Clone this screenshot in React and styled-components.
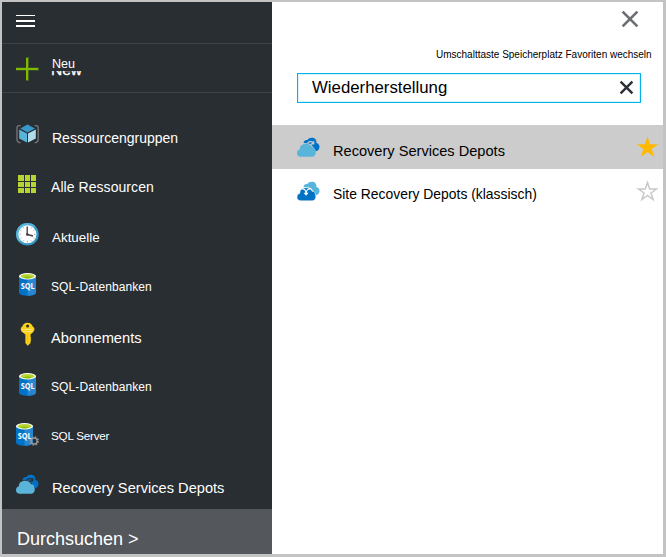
import React from "react";
import styled, { createGlobalStyle } from "styled-components";

const Global = createGlobalStyle`
  * { box-sizing: border-box; }
  body { margin: 0; background: #c3c3c3; font-family: "Liberation Sans", Arial, sans-serif; }
  svg { display: block; flex: none; }
`;

const Frame = styled.div`
  display: flex;
  width: 666px;
  height: 557px;
  padding: 2px 3px 3px 2px;
  background: #c3c3c3;
`;

const Sidebar = styled.nav`
  display: flex;
  flex-direction: column;
  width: 270px;
  background: #292e32;
  color: #fff;
`;

const MenuBar = styled.div`
  height: 42px;
  padding: 13px 14px 0;
  border-bottom: 1px solid #3e4347;
`;

const NewRow = styled.div`
  display: flex;
  height: 49px;
  padding: 13px 14px 0;
  border-bottom: 1px solid #3e4347;
`;

const NewText = styled.div`
  position: relative;
  margin-left: 12px;
`;

const HiddenCaption = styled.span`
  position: absolute;
  left: 0;
  top: 3px;
  font-size: 15.5px;
  line-height: 20px;
  -webkit-text-stroke: 0.3px #fff;
  clip-path: inset(11px 0 0 0);
`;

const Items = styled.div`
  display: flex;
  flex-direction: column;
  padding-top: 16px;
`;

const Item = styled.div`
  display: flex;
  height: 50px;
  padding: 13px 14px 0;
`;

const Label = styled.span`
  display: block;
  white-space: nowrap;
  line-height: 20px;
  height: 20px;
  font-size: ${(p) => p.$size}px;
  letter-spacing: ${(p) => p.$spacing || 0}px;
  margin-top: ${(p) => p.$top || 0}px;
  margin-left: ${(p) => p.$left || 0}px;
`;

const Browse = styled.div`
  flex: 1;
  padding: 10px 15px 0;
  background: #54575c;
`;

const Panel = styled.main`
  display: flex;
  flex-direction: column;
  flex: 1;
  background: #fff;
  color: #000;
`;

const PanelTop = styled.div`
  display: flex;
  justify-content: flex-end;
  height: 43px;
  padding: 7px 23px 0 0;
`;

const Hint = styled.div`
  height: 28px;
  padding-left: 164px;
`;

const SearchBox = styled.div`
  display: flex;
  justify-content: space-between;
  width: 344px;
  height: 30px;
  margin-left: 25px;
  padding: 4px 5px 0 14px;
  border: 1px solid #00b4ea;
  box-shadow: inset 0 0 0 1px #d8f3fb;
`;

const Results = styled.div`
  margin-top: 22px;
`;

const Result = styled.div`
  display: flex;
  height: 44px;
  padding: 10px 4px 0 25px;
  background: ${(p) => (p.$active ? "#cccccc" : "#ffffff")};
`;

const StarSlot = styled.span`
  margin-left: auto;
`;

const Cross = ({ size, width, color, top = 0 }) => (
  <svg width={size + 4} height={size + 4 + top} viewBox={`0 ${-top} ${size + 4} ${size + 4 + top}`}>
    <path
      d={`M2.600 2.600L${size + 1.4} ${size + 1.4}M${size + 1.4} 2.600L2.600 ${size + 1.4}`}
      stroke={color}
      strokeWidth={width}
    />
  </svg>
);

const MenuIcon = () => (
  <svg width="19" height="12" viewBox="0 0 19 12" fill="#fff">
    <rect width="19" height="1" />
    <rect y="5" width="19" height="2" />
    <rect y="10" width="19" height="2" />
  </svg>
);

const PlusIcon = () => (
  <svg width="23" height="24" viewBox="0 0 23 24">
    <path d="M10 0h3v24h-3zM0 10.500h23v3H0z" fill="#46641d" />
    <path d="M10 1h2v22h-2zM0 11h22v2H0z" fill="#80b900" />
  </svg>
);

const GroupIcon = () => (
  <svg width="24" height="24" viewBox="0 0 24 24">
    <path d="M4.600 3.600H3.200Q1 3.600 1 6v11.600Q1 20 3.200 20.500L4.600 21M18.600 3.600H20Q22.200 3.600 22.200 6v11.600Q22.200 20 20 20.500L18.600 21" fill="none" stroke="#75797c" strokeWidth="1.300" />
    <path d="M11.500 2.500L19 6.400 11.500 10.400 4.200 6.400z" fill="#3999c6" />
    <path d="M3.200 7.500L11 11.500V20.500L3.200 16.600z" fill="#59b4d9" />
    <path d="M19.800 7.500L12 11.500V20.500L19.800 16.600z" fill="#b0dcee" />
  </svg>
);

const GridIcon = () => (
  <svg width="24" height="24" viewBox="0 0 24 24" fill="#b8d432">
    {[3, 10, 16].map((y, r) =>
      [2, 9, 15].map((x, c) => (
        <rect key={`${x}-${y}`} x={x} y={y} width={c === 0 ? 6 : 5} height={r === 0 ? 6 : 5} />
      ))
    )}
  </svg>
);

const ClockIcon = () => (
  <svg width="24" height="24" viewBox="0 0 24 24">
    <circle cx="11.400" cy="12.300" r="11.300" fill="#3999c6" />
    <path d="M3.400 20.300A11.300 11.300 0 0 1 19.400 4.300z" fill="#59b4d9" />
    <circle cx="11.400" cy="12.300" r="9" fill="#fff" />
    <path d="M11.400 4.300v1.400M11.400 18.900v1.400M3.400 12.300h1.400M18 12.300h1.400M7.400 5.400l.5.900M15.400 5.400l-.5.900M4.500 8.300l.9.500M18.300 8.300l-.9.500M4.500 16.300l.9-.5M18.300 16.300l-.9-.5M7.400 19.200l.5-.9M15.400 19.200l-.5-.9" stroke="#888" strokeWidth=".8" />
    <path d="M11.200 4.800V12.500L17 14" fill="none" stroke="#3b3b3b" strokeWidth="1.300" />
    <circle cx="11.300" cy="12.500" r="1.300" fill="#3b3b3b" />
  </svg>
);

const Cylinder = () => (
  <>
    <path d="M0 3.200V19.500C0 21.500 4 22.800 8.500 22.800S17 21.500 17 19.500V3.200z" fill="#0072c6" />
    <path d="M8.500 3.200H17V19.500C17 21.500 13 22.800 8.500 22.800z" fill="#2686cf" />
    <ellipse cx="8.500" cy="3.300" rx="8.500" ry="3.200" fill="#fff" />
    <ellipse cx="8.500" cy="3.200" rx="6.800" ry="2.300" fill="#b8d432" />
    <path d="M3.600 4.600Q8.500 2.600 13.400 4.600Q8.500 6.400 3.600 4.600z" fill="#8cc010" />
    <text x="1.700" y="16" fill="#fff" fontFamily="Open Sans, sans-serif" fontWeight="700" fontSize="8" textLength="14" lengthAdjust="spacingAndGlyphs">SQL</text>
  </>
);

const DatabaseIcon = () => (
  <svg width="24" height="24" viewBox="0 0 24 24">
    <g transform="translate(3 1)"><Cylinder /></g>
  </svg>
);

const ServerIcon = () => (
  <svg width="24" height="24" viewBox="0 0 24 24">
    <g transform="translate(0 1)"><Cylinder /></g>
    <circle cx="18.200" cy="19" r="3" fill="none" stroke="#92969a" strokeWidth="1.500" />
    <circle cx="18.200" cy="19" r="4" fill="none" stroke="#92969a" strokeWidth="1.500" strokeDasharray="1.570 1.570" />
  </svg>
);

const KeyIcon = () => (
  <svg width="24" height="24" viewBox="0 0 24 24">
    <path fillRule="evenodd" d="M11.500 .800C14.500 .800 16.300 2.600 16.900 4.700C18.900 5.400 19 8.300 17.200 10L14.500 12.500V15L15.200 16 14.500 17 15.200 18 14.500 19.200V21L11.700 23.800 9.400 21V12.500L6.200 10C4.300 8.400 4.300 5.400 6.200 4.700C6.800 2.600 8.500 .800 11.500 .800zM11.600 2.600A1.500 1.500 0 1 0 11.600 5.600A1.500 1.500 0 1 0 11.600 2.600z" fill="#fcd116" />
    <path d="M6.500 7.500H16.700M6.500 9.500H16.700" stroke="#fff" strokeOpacity=".55" strokeWidth=".8" />
    <path d="M11.600 12.500V21.500" stroke="#f4b512" strokeWidth=".9" />
  </svg>
);

const BACK_CLOUD = "M6.500 7.800C6.700 5.800 8.500 4.600 10.400 5C11.500 3 14.500 2.200 16.700 3.100C18.900 3.900 19.700 5.900 19.400 7.900C21.700 8.300 22.900 10.500 22.500 12.600C22.100 14.500 21 16 19 16.200L14 9z";
const FRONT_CLOUD = "M4 21.800C1.400 21.800 0 20.300 0 18.200C0 16.200 1.200 14.700 2.900 14.300C2.600 10.900 5.200 8.700 8.800 8.700C12.200 8.700 14.400 10.100 15 12.300C17.300 12.100 18.500 13.500 18.200 15.300C19.700 17.500 18.500 21.800 15.200 21.800z";

const VaultIcon = ({ ground = "#292e32" }) => (
  <svg width="24" height="24" viewBox="0 0 24 24">
    <path d={BACK_CLOUD} fill="#0072c6" />
    <path d="M10.500 8.600C11.700 6.600 14 6 15.800 7.200" fill="none" stroke={ground} strokeWidth="1.300" />
    <path d="M17.300 5.500V9.600H13.200z" fill={ground} />
    <path d={FRONT_CLOUD} fill="#59b4d9" />
  </svg>
);

const ActiveVaultIcon = () => <VaultIcon ground="#cccccc" />;

const SiteRecoveryIcon = () => (
  <svg width="24" height="24" viewBox="0 0 24 24">
    <path d={BACK_CLOUD} fill="#59b4d9" />
    <path d={FRONT_CLOUD} fill="#0072c6" stroke="#fff" strokeWidth=".5" />
    <path d="M4.700 9.900Q9 9.300 9.100 15M13.800 9.900Q9.300 9.300 9.100 15" fill="none" stroke="#fff" strokeWidth="1.100" />
    <path d="M6.600 13.700H11.600L9.100 16.800z" fill="#fff" />
  </svg>
);

const StarIcon = ({ filled }) => (
  <svg width="23" height="24" viewBox="0 0 23 24">
    <path
      d={filled
        ? "M11.500 1.500L14.100 9.200H22.300L15.700 14L18.200 22L11.500 17.100L4.800 22L7.300 14L0.700 9.200H8.900z"
        : "M11.500 3.500L13.700 10.100H20.500L15 14L17.100 20.500L11.500 16.500L5.900 20.500L8 14L2.500 10.100H9.300z"}
      fill={filled ? "#ffb900" : "none"}
      stroke={filled ? "none" : "#c7c8ca"}
      strokeWidth="1.500"
    />
  </svg>
);

const items = [
  { text: "Ressourcengruppen", Icon: GroupIcon, size: 14, top: 6, left: 12 },
  { text: "Alle Ressourcen", Icon: GridIcon, size: 14, spacing: 0.06, top: 5, left: 11 },
  { text: "Aktuelle", Icon: ClockIcon, size: 13.4, top: 6, left: 12 },
  { text: "SQL-Datenbanken", Icon: DatabaseIcon, size: 12, spacing: 0.1, top: 5, left: 11 },
  { text: "Abonnements", Icon: KeyIcon, size: 14.7, top: 6, left: 11 },
  { text: "SQL-Datenbanken", Icon: DatabaseIcon, size: 12, spacing: 0.1, top: 5, left: 11 },
  { text: "SQL Server", Icon: ServerIcon, size: 11.7, spacing: -0.25, top: 4, left: 11 },
  { text: "Recovery Services Depots", Icon: VaultIcon, size: 14.6, spacing: 0.02, top: 6, left: 12 },
];

const results = [
  { text: "Recovery Services Depots", Icon: ActiveVaultIcon, size: 14.6, top: 6, active: true },
  { text: "Site Recovery Depots (klassisch)", Icon: SiteRecoveryIcon, size: 13.9, top: 5, active: false },
];

export default function App() {
  return (
    <>
      <Global />
      <Frame>
        <Sidebar>
          <MenuBar><MenuIcon /></MenuBar>
          <NewRow>
            <PlusIcon />
            <NewText>
              <HiddenCaption>New</HiddenCaption>
              <Label $size={12.6} $top={-3} $left={1}>Neu</Label>
            </NewText>
          </NewRow>
          <Items>
            {items.map(({ text, Icon, size, spacing, top, left }, i) => (
              <Item key={i}>
                <Icon />
                <Label $size={size} $spacing={spacing} $top={top} $left={left}>{text}</Label>
              </Item>
            ))}
          </Items>
          <Browse><Label $size={18} $top={10}>Durchsuchen &gt;</Label></Browse>
        </Sidebar>
        <Panel>
          <PanelTop><Cross size={16} width={2.700} color="#6b6e73" /></PanelTop>
          <Hint><Label $size={10}>Umschalttaste Speicherplatz Favoriten wechseln</Label></Hint>
          <SearchBox>
            <Label $size={16.8}>Wiederherstellung</Label>
            <Cross size={13} width={2.400} color="#2b2f36" top={1} />
          </SearchBox>
          <Results>
            {results.map(({ text, Icon, size, top, active }) => (
              <Result key={text} $active={active}>
                <Icon />
                <Label $size={size} $top={top} $left={12}>{text}</Label>
                <StarSlot><StarIcon filled={active} /></StarSlot>
              </Result>
            ))}
          </Results>
        </Panel>
      </Frame>
    </>
  );
}
